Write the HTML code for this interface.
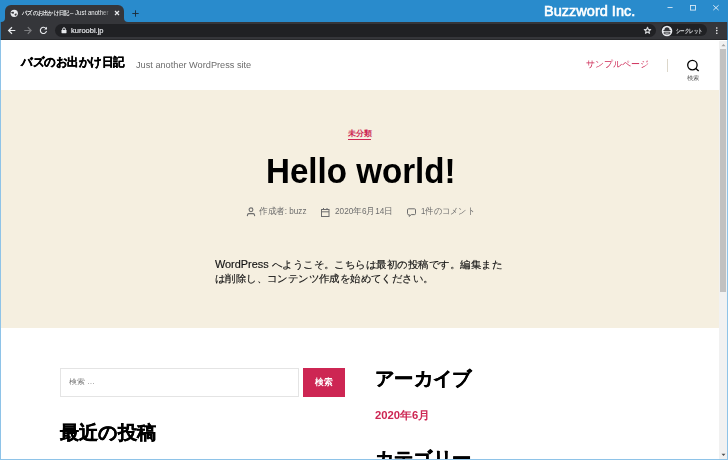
<!DOCTYPE html>
<html><head><meta charset="utf-8">
<style>
*{margin:0;padding:0;box-sizing:border-box}
html,body{width:728px;height:460px;overflow:hidden;background:#fff;font-family:"Liberation Sans",sans-serif}
div,svg{position:absolute}
.t{white-space:nowrap;line-height:1}
.fit{white-space:nowrap;line-height:1}
.fit>span{display:inline-block;transform-origin:0 0;white-space:nowrap}
#titlebar{left:0;top:0;width:728px;height:22px;background:#298bcc}
#tab{left:5px;top:4.8px;width:119px;height:17.2px;background:#35363a;border-radius:6px 6px 0 0}
#toolbar{left:0;top:22px;width:728px;height:17.5px;background:#35363a}
#tbline{left:0;top:39px;width:728px;height:1px;background:#28292c}
#omni{left:55px;top:23.6px;width:601px;height:13.8px;background:#202124;border-radius:7px}
#incog{left:661px;top:24px;width:46px;height:12px;background:#202124;border-radius:6px}
#page{left:1px;top:40px;width:718px;height:419px;background:#fff;overflow:hidden}
#hero{left:0;top:50px;width:718px;height:238px;background:#f5efe0}
#sb{left:719px;top:41px;width:8px;height:418px;background:#f1f1f1}
#thumb{left:720px;top:49px;width:6px;height:243px;background:#c1c1c1}
#bl{left:0;top:22px;width:1px;height:438px;background:#8ec3e8}
#br{left:727px;top:22px;width:1px;height:438px;background:#8ec3e8}
#bb{left:0;top:459px;width:728px;height:1px;background:#8ec3e8}
.w{color:#e8eaed}
.g{color:#6d6d6d}
.p{color:#cd2653}
.b{font-weight:bold}
.sk{-webkit-text-stroke:0.4px currentColor}
</style></head><body>
<div id="titlebar"></div>
<div id="tab"></div>
<svg style="left:1px;top:18px" width="5" height="4" viewBox="0 0 5 4"><path d="M0 4 Q4 4 4 0 L4 4 Z" fill="#35363a"/></svg>
<svg style="left:124px;top:18px" width="4" height="4" viewBox="0 0 4 4"><path d="M0 0 Q0 4 4 4 L0 4 Z" fill="#35363a"/></svg>
<svg style="left:10.2px;top:8.5px" width="9" height="9" viewBox="0 0 9 9"><circle cx="4.25" cy="4.35" r="3.65" fill="#e8eaed"/><path d="M1.2 3.3 Q2.3 2.3 3.6 2.8 Q4.3 3.6 3.8 4.6 Q2.5 4.9 1.2 4.1 Z M4.4 5.8 Q5 4.4 6.6 4.6 Q7 5.9 6 6.8 Q4.9 6.9 4.4 5.8 Z" fill="#35363a"/></svg>
<div class="fit" style="color:#f1f3f4;-webkit-text-stroke:0.15px #f1f3f4;left:22.3px;top:10px;width:47.5px;height:8px;font-size:6px"><span>バズのお出かけ日記</span></div>
<div class="fit" style="color:#f1f3f4;left:70.3px;top:9.6px;width:38.5px;height:8px;font-size:6.5px;-webkit-mask-image:linear-gradient(90deg,#000 78%,rgba(0,0,0,.25))"><span>– Just another</span></div>
<svg style="left:113.5px;top:10px" width="6" height="6" viewBox="0 0 6 6"><path d="M1 1 L5 5 M5 1 L1 5" stroke="#e8eaed" stroke-width="1.2"/></svg>
<svg style="left:132px;top:9.6px" width="7" height="7" viewBox="0 0 7 7"><path d="M3.5 0.3 V6.7 M0.3 3.5 H6.7" stroke="#1c2a36" stroke-width="0.9"/></svg>
<div class="fit" style="left:543.8px;top:3px;width:91.3px;font-size:15px;color:#fff;-webkit-text-stroke:0.6px #fff"><span>Buzzword Inc.</span></div>
<svg style="left:666px;top:3px" width="10" height="10" viewBox="0 0 10 10"><path d="M1.5 4.5 H6.6" stroke="#d6e8f6" stroke-width="0.9"/></svg>
<svg style="left:689px;top:4px" width="8" height="8" viewBox="0 0 8 8"><rect x="1.5" y="1.5" width="5" height="4.6" fill="none" stroke="#d6e8f6" stroke-width="0.9"/></svg>
<svg style="left:712px;top:4px" width="8" height="8" viewBox="0 0 8 8"><path d="M1.3 1.3 L6.6 6.1 M6.6 1.3 L1.3 6.1" stroke="#d6e8f6" stroke-width="1"/></svg>

<div id="toolbar"></div>
<div id="tbline"></div>
<svg style="left:7px;top:26px" width="10" height="9" viewBox="0 0 10 9"><path d="M8.3 4.5 H1.5 M5 1.2 L1.6 4.5 L5 7.8" stroke="#e8eaed" stroke-width="1.2" fill="none"/></svg>
<svg style="left:22.7px;top:26px" width="10" height="9" viewBox="0 0 10 9"><path d="M1.3 4.5 H8.2 M4.8 1.2 L8.1 4.5 L4.8 7.8" stroke="#7d7e81" stroke-width="1.2" fill="none"/></svg>
<svg style="left:38.8px;top:26px" width="9" height="9" viewBox="0 0 9 9"><path d="M7 2.6 A3.1 3.1 0 1 0 7.5 5" stroke="#e8eaed" stroke-width="1.15" fill="none"/><path d="M8 0.8 V3.6 H5.2 Z" fill="#e8eaed"/></svg>
<div id="omni"></div>
<svg style="left:60.7px;top:26.6px" width="6" height="7" viewBox="0 0 6 7"><path d="M1.7 3 V2.1 A1.3 1.3 0 0 1 4.3 2.1 V3" stroke="#e8eaed" stroke-width="1" fill="none"/><rect x="0.5" y="3" width="5" height="3.2" rx="0.4" fill="#e8eaed"/></svg>
<div class="fit w" style="left:70.5px;top:26.5px;width:32.5px;font-size:7.5px;-webkit-text-stroke:0.15px #e8eaed"><span>kuroobi.jp</span></div>
<svg style="left:642.8px;top:26.2px" width="9" height="9" viewBox="0 0 9 9"><path d="M4.5 1.3 L5.4 3.4 L7.7 3.5 L5.9 5 L6.5 7.3 L4.5 6 L2.5 7.3 L3.1 5 L1.3 3.5 L3.6 3.4 Z" stroke="#d4d6d8" stroke-width="1.15" stroke-linejoin="round" fill="none"/></svg>
<div id="incog"></div>
<svg style="left:661px;top:24.5px" width="12" height="12" viewBox="0 0 12 12"><circle cx="6" cy="6" r="5.3" fill="#e8eaed"/><path d="M3.4 5 Q3.6 2.2 6 2.2 Q8.4 2.2 8.6 5 Z" fill="#35363a"/><rect x="2.4" y="5" width="7.2" height="1" fill="#35363a"/><path d="M3.2 7.2 H8.8 V8.6 Q6 9.6 3.2 8.6 Z" fill="none" stroke="#35363a" stroke-width="0.9"/></svg>
<div class="fit w b" style="left:676px;top:27.5px;width:26.5px;font-size:6px"><span>シークレット</span></div>
<svg style="left:715px;top:26px" width="4" height="10" viewBox="0 0 4 10"><circle cx="1.8" cy="2" r="0.8" fill="#fff"/><circle cx="1.8" cy="4.6" r="0.8" fill="#fff"/><circle cx="1.8" cy="7.3" r="0.8" fill="#fff"/></svg>

<div id="page">
  <div id="hero"></div>
</div>
<!-- header -->
<div class="fit b sk" style="left:20.5px;top:57px;width:104px;font-size:11.5px;color:#000"><span>バズのお出かけ日記</span></div>
<div class="fit g" style="left:135.5px;top:60.5px;width:115.2px;font-size:9.2px"><span>Just another WordPress site</span></div>
<div class="fit p" style="left:586px;top:59.5px;width:62.5px;font-size:9px"><span>サンプルページ</span></div>
<div style="left:667px;top:58.5px;width:1px;height:13px;background:#dcd7ca"></div>
<svg style="left:686px;top:58px" width="15" height="15" viewBox="0 0 15 15"><circle cx="6.4" cy="7.1" r="4.7" stroke="#000" stroke-width="1.3" fill="none"/><path d="M9.8 10.5 L12.7 13.1" stroke="#000" stroke-width="1.4"/></svg>
<div class="fit" style="left:687px;top:74.5px;width:12.5px;font-size:6px;color:#555"><span>検索</span></div>

<!-- hero -->
<div class="fit p b" style="left:347.5px;top:129.5px;width:24px;font-size:7.7px"><span>未分類</span></div>
<div style="left:348px;top:139px;width:23px;height:1px;background:#cd2653"></div>
<div class="fit b" style="left:266px;top:153.8px;width:189.5px;font-size:34.6px;color:#000"><span>Hello world!</span></div>
<!-- meta -->
<svg style="left:245.5px;top:207px" width="11" height="10" viewBox="0 0 11 10"><circle cx="5" cy="2.8" r="1.9" stroke="#6d6d6d" stroke-width="1.1" fill="none"/><path d="M1.3 9.1 L1.6 7.6 Q1.9 6.6 3 6.6 H7 Q8.1 6.6 8.4 7.6 L8.7 9.1" stroke="#6d6d6d" stroke-width="1.1" fill="none"/></svg>
<div class="fit g" style="left:259px;top:207px;width:47.5px;font-size:8.5px"><span>作成者: buzz</span></div>
<svg style="left:320px;top:206.5px" width="11" height="11" viewBox="0 0 11 11"><rect x="1.5" y="2.5" width="7.5" height="7" fill="none" stroke="#6d6d6d" stroke-width="1"/><path d="M1.5 4.8 H9 M3.5 1 V3 M7 1 V3" stroke="#6d6d6d" stroke-width="1"/></svg>
<div class="fit g" style="left:335px;top:207px;width:58px;font-size:8.5px"><span>2020年6月14日</span></div>
<svg style="left:406px;top:206.5px" width="11" height="11" viewBox="0 0 11 11"><path d="M2.5 1.8 H8.5 Q9.5 1.8 9.5 2.8 V6.6 Q9.5 7.6 8.5 7.6 H5.3 L3.2 9.4 V7.6 H2.5 Q1.5 7.6 1.5 6.6 V2.8 Q1.5 1.8 2.5 1.8 Z" fill="none" stroke="#6d6d6d" stroke-width="1" stroke-linejoin="round"/></svg>
<div class="fit g" style="left:421px;top:207px;width:54px;font-size:8.5px"><span>1件のコメント</span></div>
<!-- paragraph -->
<div class="fit" style="left:215px;top:260.3px;width:287px;font-size:10.4px;color:#111;-webkit-text-stroke:0.15px #111"><span>WordPress へようこそ。こちらは最初の投稿です。編集また</span></div>
<div class="fit" style="left:215px;top:274px;width:218.5px;font-size:10.4px;color:#111;-webkit-text-stroke:0.15px #111"><span>は削除し、コンテンツ作成を始めてください。</span></div>

<!-- widgets -->
<div style="left:60px;top:368px;width:239px;height:29px;border:1px solid #e4e4e4;background:#fff"></div>
<div class="fit" style="left:69px;top:378px;width:26px;font-size:7px;color:#7a7a7a"><span>検索 …</span></div>
<div style="left:302.5px;top:368px;width:42.5px;height:28.8px;background:#cd2653"></div>
<div class="fit b" style="left:315px;top:377.5px;width:17.5px;font-size:8.5px;color:#fff"><span>検索</span></div>
<div class="fit b sk" style="left:60px;top:422.5px;width:96px;font-size:19px;color:#000"><span>最近の投稿</span></div>
<div class="fit b sk" style="left:375px;top:368.5px;width:96.5px;font-size:19px;color:#000"><span>アーカイブ</span></div>
<div class="fit p b" style="left:374.8px;top:409.5px;width:55px;font-size:10.5px"><span>2020年6月</span></div>
<div class="fit b sk" style="left:375px;top:448.5px;width:96px;font-size:19px;color:#000"><span>カテゴリー</span></div>

<div id="sb"></div>
<svg style="left:720px;top:42px" width="7" height="6" viewBox="0 0 7 6"><path d="M1.4 4.2 L3.5 2 L5.6 4.2 Z" fill="#a3a3a3"/></svg>
<div id="thumb"></div>
<svg style="left:720px;top:452px" width="7" height="6" viewBox="0 0 7 6"><path d="M1.5 1.7 L3.5 3.9 L5.5 1.7 Z" fill="#505050"/></svg>
<div id="bl"></div><div id="br"></div><div id="bb"></div>
<div style="left:0;top:0;width:1px;height:22px;background:#298bcc"></div><div style="left:0;top:22px;width:1px;height:18px;background:#2f78ad"></div><div style="left:727px;top:0;width:1px;height:22px;background:#298bcc"></div><div style="left:727px;top:22px;width:1px;height:18px;background:#2f78ad"></div>
<script>
(function(){
  var els=document.querySelectorAll('.fit');
  for(var i=0;i<els.length;i++){
    var e=els[i],s=e.firstElementChild;
    var W=parseFloat(e.style.width),w=s.getBoundingClientRect().width;
    if(w>0&&W>0){s.style.transform='scaleX('+(W/w)+')';}
  }
})();
</script>
</body></html>
